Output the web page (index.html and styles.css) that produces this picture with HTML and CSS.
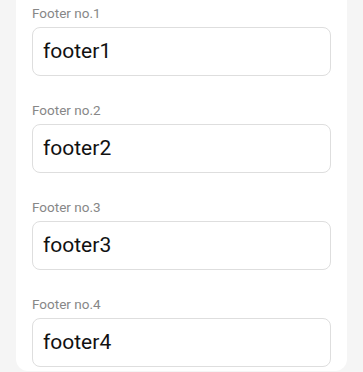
FILE: index.html
```html
<!DOCTYPE html>
<html lang="en">
<head>
    <meta charset="UTF-8">
    <meta name="viewport" content="width=device-width, initial-scale=1.0">
    <title>Footers</title>
    <link rel="stylesheet" href="styles.css">
</head>
<body>
    <div class="card">
        <div class="field">
            <label for="footer1">Footer no.1</label>
            <input type="text" id="footer1" value="footer1">
        </div>
        <div class="field">
            <label for="footer2">Footer no.2</label>
            <input type="text" id="footer2" value="footer2">
        </div>
        <div class="field">
            <label for="footer3">Footer no.3</label>
            <input type="text" id="footer3" value="footer3">
        </div>
        <div class="field">
            <label for="footer4">Footer no.4</label>
            <input type="text" id="footer4" value="footer4">
        </div>
    </div>
</body>
</html>
```

FILE: styles.css
```css
body {
    margin: 0;
    background-color: #f5f5f5;
    font-family: Roboto, "Liberation Sans", sans-serif;
}

.card {
    margin: 0 16px;
    padding: 4px 16px 4px;
    background-color: #fff;
    border-radius: 0 0 12px 12px;
}

.field {
    display: flex;
    flex-direction: column;
    margin-bottom: 25px;
}

.field:last-child {
    margin-bottom: 0;
}

.field label {
    font-size: 13.5px;
    line-height: 18px;
    color: #878787;
    margin-bottom: 5px;
}

.field input {
    box-sizing: border-box;
    height: 49px;
    width: 100%;
    padding: 0 10px 1px;
    border: 1px solid #dedede;
    border-radius: 8px;
    font-family: Roboto, "Liberation Sans", sans-serif;
    font-size: 21px;
    color: #111;
    background-color: #fff;
    outline: none;
}
```
